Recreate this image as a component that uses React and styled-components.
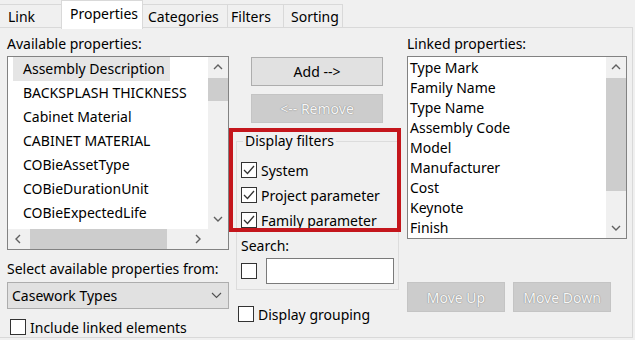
import styled, { createGlobalStyle } from "styled-components";

const GlobalStyle = createGlobalStyle`
  html, body {
    margin: 0;
    padding: 0;
    background: #f0f0f0;
  }
  body {
    font-family: "Noto Sans", "Open Sans", sans-serif;
    font-size: 14px;
    color: #000;
  }
`;

const Window = styled.div`
  width: 635px;
  height: 340px;
  overflow: hidden;
  background: #f0f0f0;
`;

const TabBar = styled.div`
  display: flex;
  align-items: flex-end;
  height: 28px;
  position: relative;
  z-index: 1;
`;

const Tab = styled.div`
  box-sizing: border-box;
  width: ${(p) => p.$w}px;
  height: ${(p) => (p.$active ? 29 : 24)}px;
  margin-bottom: ${(p) => (p.$active ? -1 : 0)}px;
  padding-left: ${(p) => p.$pad}px;
  line-height: ${(p) => (p.$active ? 26 : 24)}px;
  background: ${(p) => (p.$active ? "#fff" : "#f0f0f0")};
  border: 1px solid #d9d9d9;
  border-bottom: ${(p) => (p.$active ? "none" : "1px solid #d9d9d9")};
  border-left: ${(p) => (p.$first ? "none" : "1px solid #d9d9d9")};
  margin-left: ${(p) => (p.$first ? 0 : -1)}px;
  white-space: nowrap;
`;

const Panel = styled.div`
  box-sizing: border-box;
  width: 633px;
  height: 311px;
  margin-top: -1px;
  border: 1px solid #d9d9d9;
  border-left: none;
  padding: 7px 0 0 7px;
  display: grid;
  grid-template-columns: 222px 178px 220px;
  align-items: start;
`;

const Column = styled.div`
  display: flex;
  flex-direction: column;
  align-items: flex-start;
`;

const Label = styled.div`
  line-height: 18px;
  height: 18px;
  margin-top: ${(p) => p.$top || 0}px;
  margin-left: ${(p) => p.$left || 0}px;
  white-space: nowrap;
`;

const ListBox = styled.div`
  box-sizing: border-box;
  width: 100%;
  height: ${(p) => p.$h}px;
  margin-top: 3px;
  border: 1px solid #828282;
  background: #fff;
  display: grid;
  grid-template-columns: 1fr 20px;
  grid-template-rows: ${(p) => (p.$hscroll ? "1fr 20px" : "1fr")};
  overflow: hidden;
`;

const Items = styled.div`
  overflow: hidden;
  padding: ${(p) => p.$pad};
  display: flex;
  flex-direction: column;
  align-items: flex-start;
`;

const Item = styled.div`
  flex: none;
  height: ${(p) => p.$h}px;
  line-height: ${(p) => p.$h}px;
  padding: ${(p) => p.$pad};
  background: ${(p) => (p.$selected ? "#e5e5e5" : "transparent")};
  white-space: nowrap;
`;

const VScroll = styled.div`
  display: flex;
  flex-direction: column;
  background: #f0f0f0;
`;

const HScroll = styled.div`
  display: flex;
  background: #f0f0f0;
`;

const Corner = styled.div`
  background: #f0f0f0;
`;

const ArrowCell = styled.div`
  flex: none;
  width: 20px;
  height: 20px;
  display: flex;
  align-items: center;
  justify-content: center;
`;

const Track = styled.div`
  flex: 1;
  display: flex;
  flex-direction: ${(p) => (p.$horizontal ? "row" : "column")};
`;

const Thumb = styled.div`
  background: #cdcdcd;
  flex: none;
  ${(p) =>
    p.$horizontal
      ? `width: ${p.$size}px; margin-left: ${p.$offset}px; height: 100%;`
      : `height: ${p.$size}px; margin-top: ${p.$offset}px; width: 100%;`}
`;

const Chevron = ({ dir }) => {
  const pts = {
    up: "1,6 5,2 9,6",
    down: "1,2 5,6 9,2",
    left: "6,1 2,5 6,9",
    right: "2,1 6,5 2,9",
  }[dir];
  const vertical = dir === "up" || dir === "down";
  return (
    <svg
      width={vertical ? 10 : 8}
      height={vertical ? 8 : 10}
      viewBox={vertical ? "0 0 10 8" : "0 0 8 10"}
    >
      <polyline points={pts} fill="none" stroke="#606060" strokeWidth="1.4" />
    </svg>
  );
};

const Select = styled.div`
  box-sizing: border-box;
  width: 100%;
  height: 27px;
  margin-top: 4px;
  background: #e1e1e1;
  border: 1px solid #adadad;
  display: flex;
  align-items: center;
  justify-content: space-between;
  padding: 0 6px 0 4px;
`;

const CheckRow = styled.div`
  display: flex;
  align-items: center;
  gap: ${(p) => p.$gap || 5}px;
  height: ${(p) => p.$h || 20}px;
  margin-top: ${(p) => p.$top || 0}px;
  margin-left: ${(p) => p.$left || 0}px;
  white-space: nowrap;
`;

const Box = styled.div`
  box-sizing: border-box;
  flex: none;
  width: 16px;
  height: 16px;
  border: 1px solid #333;
  background: #fff;
  display: flex;
  align-items: center;
  justify-content: center;
`;

const CheckBox = ({ checked }) => (
  <Box>
    {checked && (
      <svg width="14" height="14" viewBox="0 0 14 14">
        <polyline
          points="2,7 5.5,10.5 12,3"
          fill="none"
          stroke="#333"
          strokeWidth="1.3"
        />
      </svg>
    )}
  </Box>
);

const Button = styled.div`
  box-sizing: border-box;
  width: ${(p) => p.$w}px;
  height: ${(p) => p.$h}px;
  margin-top: ${(p) => p.$top || 0}px;
  margin-left: ${(p) => p.$left || 0}px;
  display: flex;
  align-items: center;
  justify-content: center;
  background: ${(p) => (p.$disabled ? "#cccccc" : "#e1e1e1")};
  border: 1px solid ${(p) => (p.$disabled ? "#c4c4c4" : "#adadad")};
  color: ${(p) => (p.$disabled ? "#f7f7f7" : "#000")};
  text-shadow: ${(p) =>
    p.$disabled ? "0 0 1px #8a8a8a, 0 0 1px #8a8a8a" : "none"};
  white-space: nowrap;
`;

const ButtonRow = styled.div`
  display: flex;
  gap: 8px;
  margin-top: 43px;
`;

const GroupBox = styled.fieldset`
  position: relative;
  box-sizing: border-box;
  width: 163px;
  height: 158px;
  margin: 9px 0 0 7px;
  padding: 10px 4px 5px 4px;
  border: 1px solid #dcdcdc;
  min-inline-size: 0;
  display: flex;
  flex-direction: column;
  gap: 5px;
`;

const Legend = styled.legend`
  padding: 0 2px;
  margin-left: 2px;
  line-height: 18px;
`;

/* red annotation frame drawn over the top of the group box */
const Highlight = styled.div`
  position: absolute;
  left: -8px;
  top: -22px;
  width: 172px;
  height: 104px;
  box-sizing: border-box;
  border: 4px solid #c4161c;
  pointer-events: none;
`;

const SearchRow = styled.div`
  display: flex;
  align-items: center;
  gap: 9px;
  margin-top: -2px;
`;

const TextInput = styled.div`
  box-sizing: border-box;
  width: 128px;
  height: 26px;
  background: #fff;
  border: 1px solid #7a7a7a;
`;

const available = [
  "Assembly Description",
  "BACKSPLASH THICKNESS",
  "Cabinet Material",
  "CABINET MATERIAL",
  "COBieAssetType",
  "COBieDurationUnit",
  "COBieExpectedLife",
];

const linked = [
  "Type Mark",
  "Family Name",
  "Type Name",
  "Assembly Code",
  "Model",
  "Manufacturer",
  "Cost",
  "Keynote",
  "Finish",
];

const tabs = [
  { name: "Link", w: 62, pad: 8 },
  { name: "Properties", w: 82, pad: 8, active: true },
  { name: "Categories", w: 86, pad: 5 },
  { name: "Filters", w: 57, pad: 3 },
  { name: "Sorting", w: 60, pad: 7 },
];

const App = () => {
  return (
    <Window>
      <GlobalStyle />
      <TabBar>
        {tabs.map((t, i) => (
          <Tab key={t.name} $w={t.w} $pad={t.pad} $active={t.active} $first={i === 0}>
            {t.name}
          </Tab>
        ))}
      </TabBar>
      <Panel>
        <Column>
          <Label>Available properties:</Label>
          <ListBox $h={194} $hscroll>
            <Items $pad="0 0 0 5px">
              {available.map((a, i) => (
                <Item key={a} $h={24} $pad="0 5px 0 10px" $selected={i === 0}>
                  {a}
                </Item>
              ))}
            </Items>
            <VScroll>
              <ArrowCell>
                <Chevron dir="up" />
              </ArrowCell>
              <Track>
                <Thumb $size={23} $offset={1} />
              </Track>
              <ArrowCell>
                <Chevron dir="down" />
              </ArrowCell>
            </VScroll>
            <HScroll>
              <ArrowCell>
                <Chevron dir="left" />
              </ArrowCell>
              <Track $horizontal>
                <Thumb $horizontal $size={137} $offset={2} />
              </Track>
              <ArrowCell>
                <Chevron dir="right" />
              </ArrowCell>
            </HScroll>
            <Corner />
          </ListBox>
          <Label $top={10}>Select available properties from:</Label>
          <Select>
            <span>Casework Types</span>
            <svg width="11" height="7" viewBox="0 0 11 7">
              <polyline points="1,1 5.5,5.5 10,1" fill="none" stroke="#505050" strokeWidth="1.1" />
            </svg>
          </Select>
          <CheckRow $top={10} $left={3} $h={16} $gap={4}>
            <CheckBox />
            Include linked elements
          </CheckRow>
        </Column>

        <Column>
          <Button $w={132} $h={29} $top={22} $left={22}>
            Add --&gt;
          </Button>
          <Button $w={132} $h={29} $top={8} $left={22} $disabled>
            &lt;-- Remove
          </Button>
          <GroupBox>
            <Legend>Display filters</Legend>
            <Highlight />
            <CheckRow $gap={4}>
              <CheckBox checked />
              System
            </CheckRow>
            <CheckRow $gap={4}>
              <CheckBox checked />
              Project parameter
            </CheckRow>
            <CheckRow $gap={4}>
              <CheckBox checked />
              Family parameter
            </CheckRow>
            <Label $top={2}>Search:</Label>
            <SearchRow>
              <CheckBox />
              <TextInput />
            </SearchRow>
          </GroupBox>
          <CheckRow $top={16} $left={9} $h={16} $gap={4}>
            <CheckBox />
            Display grouping
          </CheckRow>
        </Column>

        <Column>
          <Label>Linked properties:</Label>
          <ListBox $h={183}>
            <Items $pad="1px 0 0 2px">
              {linked.map((l) => (
                <Item key={l} $h={20} $pad="0">
                  {l}
                </Item>
              ))}
            </Items>
            <VScroll>
              <ArrowCell>
                <Chevron dir="up" />
              </ArrowCell>
              <Track>
                <Thumb $size={113} $offset={1} />
              </Track>
              <ArrowCell>
                <Chevron dir="down" />
              </ArrowCell>
            </VScroll>
          </ListBox>
          <ButtonRow>
            <Button $w={98} $h={30} $disabled>
              Move Up
            </Button>
            <Button $w={98} $h={30} $disabled>
              Move Down
            </Button>
          </ButtonRow>
        </Column>
      </Panel>
    </Window>
  );
};

export default App;
